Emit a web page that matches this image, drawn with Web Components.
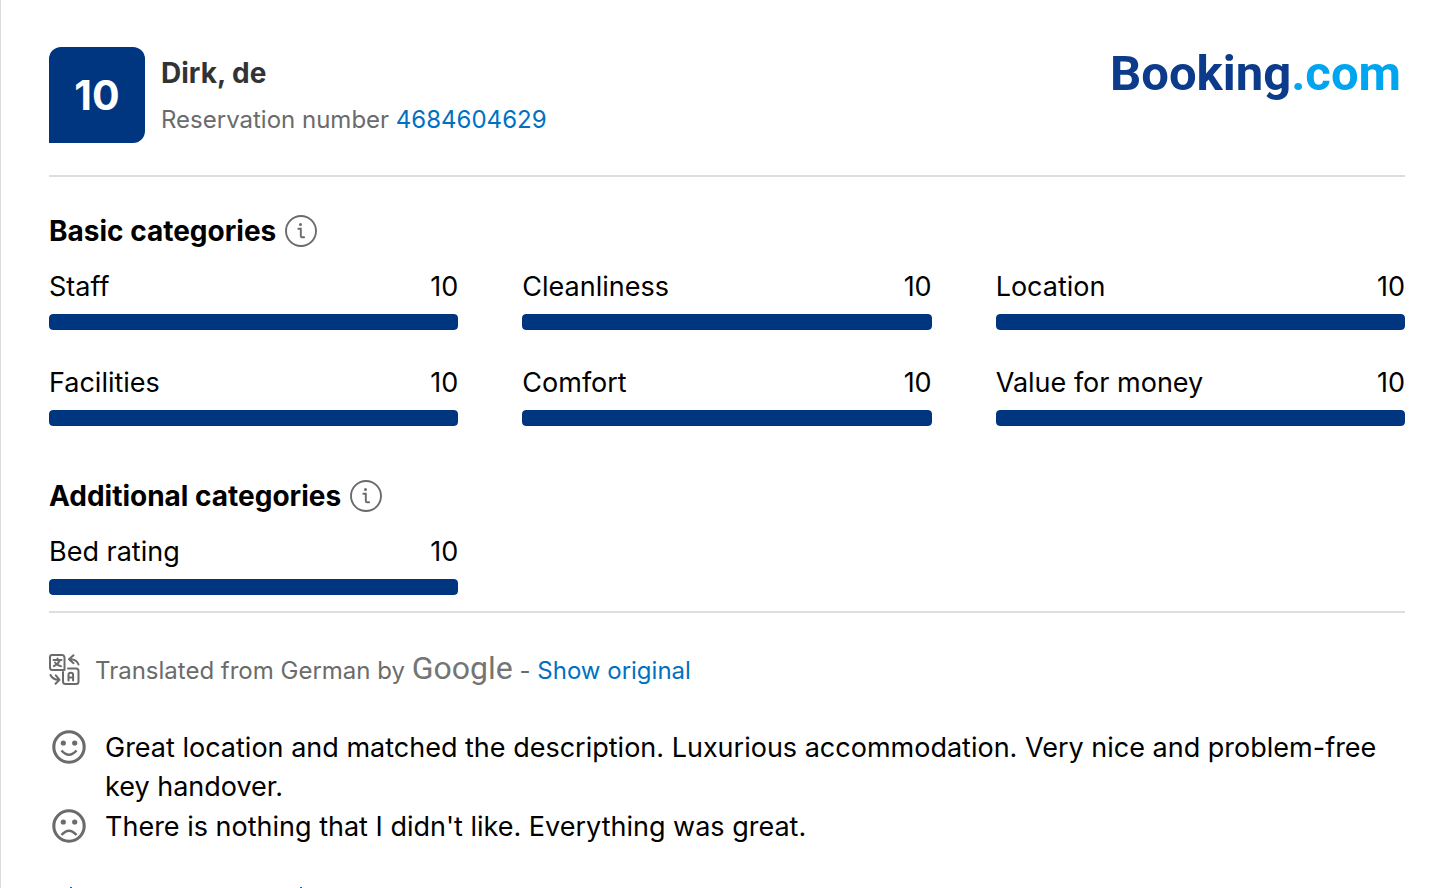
<!DOCTYPE html>
<html lang="en">
<head>
<meta charset="utf-8">
<title>Guest review</title>
<style>
  body { margin: 0; background: #fff; color: #000; font: 400 27px/39px Inter, "Liberation Sans", sans-serif; }
</style>
</head>
<body>
<guest-review></guest-review>

<template id="t-review">
  <style>
    :host { display: block; height: 100vh; overflow: hidden; box-sizing: border-box; border-left: 1px solid #dcdcdc; padding: 47px 47px 0 48px; }
    hr { border: 0; margin: 0; height: 2px; background: #dedede; }
    rating-group { margin-top: 34px; }
    rating-group.more { margin: 50px 0 16px; }
    .comments { margin-top: 38px; display: grid; gap: 1px; }
  </style>
  <review-header score="10" guest="Dirk, de" reservation="4684604629"></review-header>
  <hr>
  <rating-group heading="Basic categories">
    <rating-bar label="Staff" value="10"></rating-bar>
    <rating-bar label="Cleanliness" value="10"></rating-bar>
    <rating-bar label="Location" value="10"></rating-bar>
    <rating-bar label="Facilities" value="10"></rating-bar>
    <rating-bar label="Comfort" value="10"></rating-bar>
    <rating-bar label="Value for money" value="10"></rating-bar>
  </rating-group>
  <rating-group class="more" heading="Additional categories">
    <rating-bar label="Bed rating" value="10"></rating-bar>
  </rating-group>
  <hr>
  <translation-note language="German"></translation-note>
  <div class="comments">
    <review-comment mood="good">Great location and matched the description. Luxurious accommodation. Very nice and problem-free key handover.</review-comment>
    <review-comment mood="bad">There is nothing that I didn't like. Everything was great.</review-comment>
  </div>
  <next-row></next-row>
</template>

<template id="t-header">
  <style>
    :host { display: flex; align-items: flex-start; padding-bottom: 32px; }
    .score { width: 96px; height: 96px; flex: none; border-radius: 12px 12px 12px 0; background: #003580; color: #fff; font-weight: 700; font-size: 41px; display: flex; align-items: center; justify-content: center; }
    .who { flex: 1; margin-left: 16px; }
    h1 { margin: 6px 0; font-size: 28px; line-height: 40px; font-weight: 700; color: #333; }
    p { margin: 0; font-size: 24px; line-height: 42px; color: #6b6b6b; }
    a { color: #0071c2; text-decoration: none; }
  </style>
  <div class="score"></div>
  <div class="who">
    <h1></h1>
    <p>Reservation number <a href="#reservation"></a></p>
  </div>
  <booking-logo></booking-logo>
</template>

<template id="t-logo">
  <style>
    :host { display: block; font: 700 49px/54px Roboto, "Liberation Sans", sans-serif; color: #0c3b8c; margin-right: 4px; }
    span { color: #00a5f0; }
  </style>Booking<span>.com</span>
</template>

<template id="t-group">
  <style>
    :host { display: block; }
    header { display: flex; align-items: center; gap: 9px; height: 40px; margin-bottom: 16px; }
    h2 { margin: 0; font-size: 28px; font-weight: 700; }
    button { padding: 0; border: 0; background: none; width: 32px; height: 32px; color: #6b6b6b; }
    svg { display: block; }
    .grid { display: grid; grid-template-columns: repeat(3, 1fr); gap: 33px 64px; }
  </style>
  <header>
    <h2></h2>
    <button type="button" aria-label="More information">
      <svg width="32" height="32" viewBox="0 0 32 32" fill="none" stroke="currentColor" stroke-width="1.9">
        <circle cx="16" cy="16" r="15"/>
        <path d="M13.3 13.7h2.500v7.200q0 1.400 1.400 1.400h1.900" stroke-linecap="round"/>
        <circle cx="15.500" cy="9.500" r="1.500" fill="currentColor" stroke="none"/>
      </svg>
    </button>
  </header>
  <div class="grid"><slot></slot></div>
</template>

<template id="t-bar">
  <style>
    :host { display: block; }
    .row { display: flex; justify-content: space-between; line-height: 40px; margin-bottom: 7px; }
    .track { height: 16px; border-radius: 4px; background: #e6e6e6; overflow: hidden; }
    .fill { height: 100%; border-radius: 4px; background: #003580; }
  </style>
  <div class="row"><span id="label"></span><span id="value"></span></div>
  <div class="track" role="meter" aria-labelledby="label" aria-valuemin="0" aria-valuemax="10"><div class="fill"></div></div>
</template>

<template id="t-note">
  <style>
    :host { display: flex; align-items: center; margin-top: 37px; height: 40px; font-size: 24px; color: #6b6b6b; white-space: pre; }
    svg { margin-right: 15px; flex: none; }
    .google { font: 400 32px/36px Roboto, sans-serif; color: #757575; padding-bottom: 4px; }
    a { color: #0071c2; text-decoration: none; }
  </style>
  <svg width="31" height="32" viewBox="0 0 31 32" fill="none" stroke="currentColor" stroke-width="2" stroke-linecap="round" stroke-linejoin="round" aria-hidden="true">
    <path d="M3 1h10a2.500 2.500 0 0 1 2.500 2.500V16H3.500A2.500 2.500 0 0 1 1 13.500V3a2 2 0 0 1 2-2z"/>
    <path d="M4.500 6h8M8.500 4.500V6M10.800 6.200q-1.500 4-6 6M6 8.500q2 2.800 6 3.700"/>
    <path d="M19 14.500h8a2.500 2.500 0 0 1 2.500 2.500v10.500a2.500 2.500 0 0 1-2.500 2.500H16.500a2.500 2.500 0 0 1-2.500-2.500V18"/>
    <path d="M19.500 26.500V21a2.300 2.300 0 0 1 4.600 0v5.500M19.500 23.500h4.600"/>
    <path d="M24.500 1.200l-4.500 4 4.500 4M20.500 5.200q7-.5 9 5.300"/>
    <path d="M6.500 29.800l4-4-3.700-4.500M10 25.700Q4 26 1.500 21"/>
  </svg><span>Translated from <slot></slot> by </span><span class="google">Google</span><span> - </span><a href="#original">Show original</a>
</template>

<template id="t-comment">
  <style>
    :host { display: flex; gap: 18px; }
    svg { flex: none; margin: 2px 0 0 3px; color: #6b6b6b; }
    p { margin: 0; flex: 1; }
  </style>
  <svg width="35" height="35" viewBox="0 0 35 35" fill="none" stroke="currentColor" stroke-width="3.100" aria-hidden="true">
    <circle cx="17" cy="17" r="15.200"/>
    <circle cx="11.300" cy="13" r="2.600" fill="currentColor" stroke="none"/>
    <circle cx="22.700" cy="13" r="2.600" fill="currentColor" stroke="none"/>
    <path id="mouth" stroke-width="2.500"/>
  </svg>
  <p><slot></slot></p>
</template>

<template id="t-next">
  <style>
    :host { display: block; margin-top: 41px; color: #0071c2; }
    svg { display: block; }
  </style>
  <svg width="260" height="2" fill="currentColor" aria-hidden="true"><rect x="21" y="0" width="2" height="2"/><rect x="251" y="0" width="2" height="2"/></svg>
</template>

<script>
  class Base extends HTMLElement {
    constructor(id) {
      super();
      this.attachShadow({ mode: "open" }).append(document.getElementById(id).content.cloneNode(true));
    }
    $(q) { return this.shadowRoot.querySelector(q); }
  }
  customElements.define("booking-logo", class extends Base { constructor() { super("t-logo"); } });
  customElements.define("next-row", class extends Base { constructor() { super("t-next"); } });
  customElements.define("review-header", class extends Base {
    constructor() { super("t-header"); }
    connectedCallback() {
      this.$(".score").textContent = this.getAttribute("score");
      this.$("h1").textContent = this.getAttribute("guest");
      this.$("a").textContent = this.getAttribute("reservation");
    }
  });
  customElements.define("rating-group", class extends Base {
    constructor() { super("t-group"); }
    connectedCallback() { this.$("h2").textContent = this.getAttribute("heading"); }
  });
  customElements.define("rating-bar", class extends Base {
    constructor() { super("t-bar"); }
    connectedCallback() {
      const value = this.getAttribute("value");
      this.$("#label").textContent = this.getAttribute("label");
      this.$("#value").textContent = value;
      this.$(".track").setAttribute("aria-valuenow", value);
      this.$(".fill").style.width = value * 10 + "%";
    }
  });
  customElements.define("translation-note", class extends Base {
    constructor() { super("t-note"); }
    connectedCallback() { this.$("slot").textContent = this.getAttribute("language"); }
  });
  customElements.define("review-comment", class extends Base {
    constructor() { super("t-comment"); }
    connectedCallback() {
      this.$("#mouth").setAttribute("d", this.getAttribute("mood") === "good" ? "M9.500 20.500q7.500 8.500 15 0" : "M9.500 26q7.500-8.500 15 0");
    }
  });
  customElements.define("guest-review", class extends Base { constructor() { super("t-review"); } });
</script>
</body>
</html>
